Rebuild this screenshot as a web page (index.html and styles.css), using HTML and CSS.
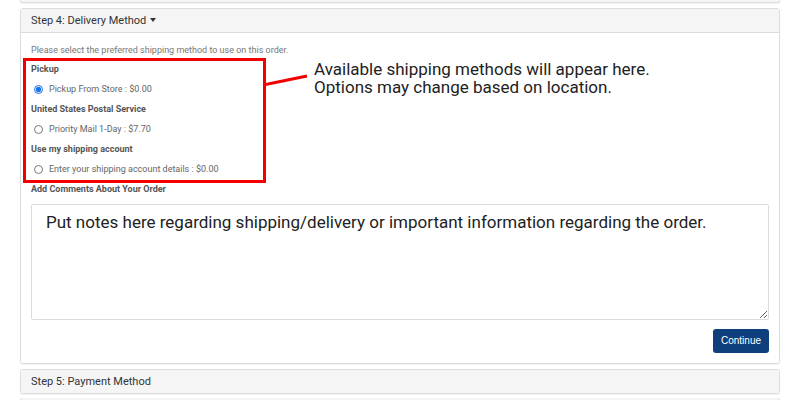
FILE: index.html
```html
<!DOCTYPE html>
<html lang="en">
<head>
    <meta charset="UTF-8">
    <title>Checkout - Delivery Method</title>
    <link rel="stylesheet" href="styles.css">
</head>
<body>
    <div class="checkout">
        <div class="panel panel-stub"></div>

        <div class="panel">
            <div class="panel-heading">Step 4: Delivery Method <span class="caret"></span></div>
            <div class="panel-body">
                <p class="intro">Please select the preferred shipping method to use on this order.</p>

                <div class="shipping-options">
                    <div class="method-title">Pickup</div>
                    <label class="method"><input type="radio" name="shipping" checked> Pickup From Store : $0.00</label>
                    <div class="method-title">United States Postal Service</div>
                    <label class="method"><input type="radio" name="shipping"> Priority Mail 1-Day : $7.70</label>
                    <div class="method-title">Use my shipping account</div>
                    <label class="method"><input type="radio" name="shipping"> Enter your shipping account details : $0.00</label>

                    <div class="callout">
                        <svg class="callout-line" width="46" height="14" viewBox="0 0 46 14">
                            <line x1="0" y1="11" x2="44" y2="2" stroke="#f20000" stroke-width="3"/>
                        </svg>
                        <p class="callout-text">Available shipping methods will appear here.<br>Options may change based on location.</p>
                    </div>
                </div>

                <div class="method-title comments-title">Add Comments About Your Order</div>
                <textarea class="comments" rows="6">Put notes here regarding shipping/delivery or important information regarding the order.</textarea>

                <div class="actions">
                    <button class="btn-continue">Continue</button>
                </div>
            </div>
        </div>

        <div class="panel">
            <div class="panel-heading">Step 5: Payment Method</div>
        </div>

        <div class="panel panel-stub"></div>
    </div>
</body>
</html>
```

FILE: styles.css
```css
:root {
    --border-color: #dcdcdc;
    --heading-bg: #f5f5f5;
    --text-color: #555;
    --brand-blue: #0c3f7c;
    --highlight: #f20000;
}

body {
    margin: 0;
    font-family: 'Roboto', 'Liberation Sans', sans-serif;
    color: var(--text-color);
    background-color: #fff;
}

.checkout {
    padding: 0 20px;
}

.panel {
    border: 1px solid var(--border-color);
    border-radius: 3px;
    margin-bottom: 5px;
    background-color: #fff;
    box-shadow: 0 1px 1px rgba(0, 0, 0, 0.05);
}

.panel-stub {
    height: 3px;
    margin-top: -1px;
    background-color: var(--heading-bg);
    border-top: none;
}

.panel-heading {
    background-color: var(--heading-bg);
    color: #333;
    font-size: 11px;
    line-height: 23px;
    padding: 0 10px;
}

.panel-heading + .panel-body {
    border-top: 1px solid var(--border-color);
}

.caret {
    display: inline-block;
    width: 0;
    height: 0;
    border-left: 3.5px solid transparent;
    border-right: 3.5px solid transparent;
    border-top: 4px solid #333;
    vertical-align: middle;
    margin-left: 1px;
    margin-top: -2px;
}

.panel-body {
    padding: 9px 10px 10px;
}

.intro {
    margin: 0;
    font-size: 9px;
    line-height: 16px;
    color: #777;
}

.shipping-options {
    position: relative;
    width: 232px;
    margin-left: -8px;
    padding: 0 0 0 5px;
    border: 3px solid var(--highlight);
}

.method-title {
    font-size: 9px;
    font-weight: bold;
    line-height: 18.5px;
    color: var(--text-color);
}

.shipping-options .method-title:first-child {
    margin-top: -1px;
}

.method {
    display: flex;
    align-items: center;
    font-size: 9px;
    line-height: 21.5px;
    color: #666;
}

.method input {
    width: 9px;
    height: 9px;
    margin: 0 6px 0 3px;
    accent-color: #1a73e8;
}

.callout {
    position: absolute;
    left: 237px;
    top: -1px;
    display: flex;
    align-items: flex-start;
}

.callout-line {
    margin-top: 14px;
    flex-shrink: 0;
}

.callout-text {
    margin: 0 0 0 5px;
    font-size: 17px;
    line-height: 18px;
    color: #222;
    white-space: nowrap;
}

.comments-title {
    margin-top: -3px;
}

.comments {
    display: block;
    box-sizing: border-box;
    width: 100%;
    height: 116px;
    margin-top: 5px;
    padding: 7px 14px;
    border: 1px solid var(--border-color);
    border-radius: 2px;
    font-family: 'Roboto', 'Liberation Sans', sans-serif;
    font-size: 17px;
    color: #222;
    resize: vertical;
}

.actions {
    display: flex;
    justify-content: flex-end;
    margin-top: 9px;
}

.btn-continue {
    background-color: var(--brand-blue);
    color: #fff;
    border: none;
    border-radius: 3px;
    font-family: 'Liberation Sans', Arial, sans-serif;
    font-size: 10px;
    height: 24px;
    padding: 0 8px;
    cursor: pointer;
}
```
